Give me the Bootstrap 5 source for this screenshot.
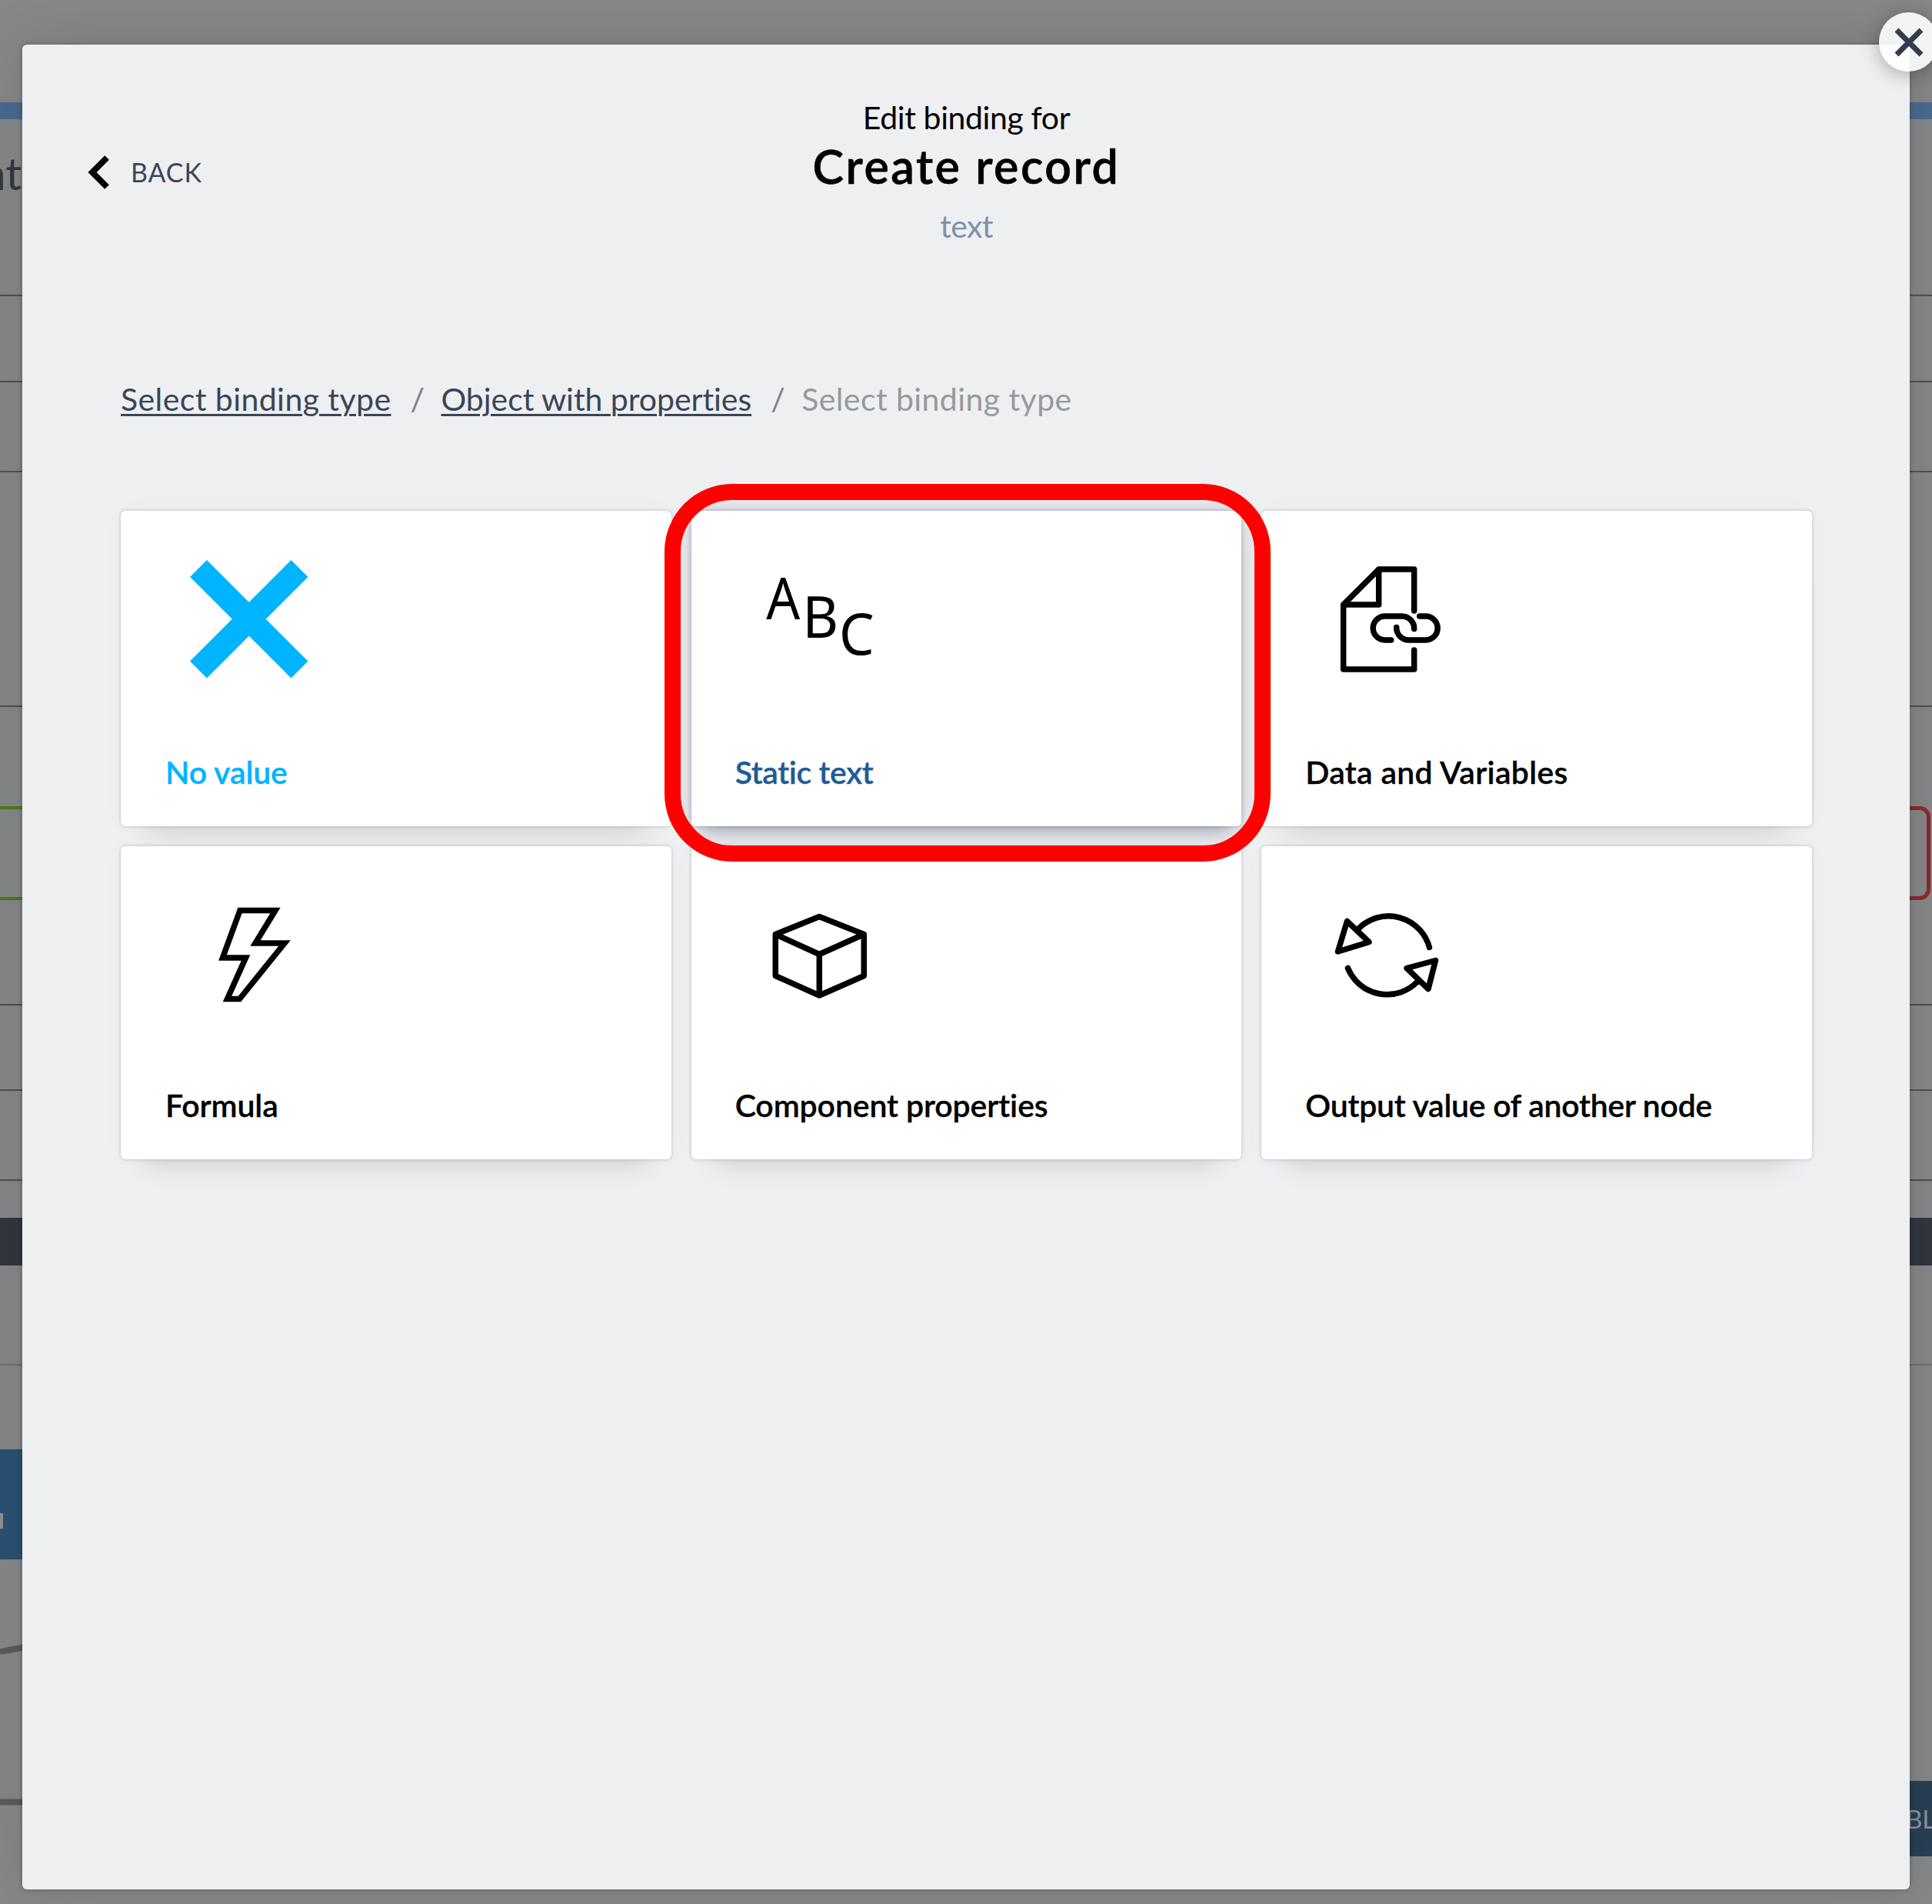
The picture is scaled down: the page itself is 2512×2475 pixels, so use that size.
<!DOCTYPE html>
<html lang="en">
<head>
<meta charset="utf-8">
<meta name="viewport" content="width=device-width, initial-scale=1">
<title>Edit binding</title>
<link href="https://cdn.jsdelivr.net/npm/bootstrap@5.3.0/dist/css/bootstrap.min.css" rel="stylesheet">
<style>
  html, body { height: 2475px; }
  body { font-family: Lato, "Open Sans", sans-serif; font-size: 41px; line-height: 50px; color: #000; background: #868788; overflow: hidden; }
  /* dimmed page behind the dialog */
  .canvas { height: 2475px; }
  .ln { height: 2px; background: #4e5056; }
  .thin { background: #6d6e70; }
  .topbar { height: 22px; background: #4a6a90; }
  .darkbar { height: 62px; background: #32363f; }
  .h-top { height: 133px; } .h-title { height: 228px; } .h-a { height: 110px; } .h-b { height: 115px; } .h-c { height: 304px; }
  .h-d { height: 129px; } .h-e { height: 135px; } .h-f { height: 115px; } .h-g { height: 48px; } .h-h { height: 128px; } .h-i { height: 109px; }
  .page-title { font-size: 58px; line-height: 68px; color: #33383f; width: 28px; padding-top: 36px; direction: rtl; white-space: nowrap; overflow: hidden; }
  .green-box { width: 60px; height: 122px; border: solid #4a7c1f; border-width: 4px 0; }
  .red-box { width: 60px; height: 122px; border: 5px solid #8c2a2c; border-left: 0; border-radius: 0 14px 14px 0; margin-right: 2px; }
  .blue-left { width: 60px; height: 143px; background: #2b5273; padding-top: 83px; }
  .blue-left i { display: block; width: 4px; height: 20px; background: #94908f; }
  .blue-right { width: 52px; height: 98px; margin-top: 431px; background: #293f53; color: #8b9399; font-size: 33px; line-height: 98px; padding-left: 18px; white-space: nowrap; overflow: hidden; }
  .wires { width: 60px; height: 448px; display: block; }

  .dialog { left: 29px; top: 58px; width: 2454px; height: 2398px; background: #eeeff1; border-radius: 6px; padding: 70px 127px 0 128px; box-shadow: 0 0 6px rgba(0,0,0,.25), 0 0 80px rgba(0,0,0,.12); }
  .close-btn { left: 2443px; top: 16px; width: 77px; height: 77px; background: rgba(255,255,255,.9); box-shadow: 0 4px 24px rgba(0,0,0,.3); }
  .back { font-size: 34px; color: #3c4658; letter-spacing: .9px; margin-left: -44px; margin-top: 71px; gap: 27px; }
  .dlg-head { height: 366px; }
  .dlg-lead { letter-spacing: -.4px; }
  .dlg-title { font-size: 61px; line-height: 72px; font-weight: 600; letter-spacing: 2.5px; margin: 2px 0 17px; -webkit-text-stroke: .6px; }
  .sub { color: #8090aa; letter-spacing: -.6px; }
  .trail { letter-spacing: .42px; margin-bottom: 120px; color: #999b9f; --bs-breadcrumb-divider-color: #7e8186; --bs-breadcrumb-item-padding-x: 25px; }
  .trail a { color: #3a4557; text-decoration-thickness: 3px; text-underline-offset: 4px; }
  .trail .tight { letter-spacing: -.05px; }
  .trail .active { color: #97999d; }
  .trail .breadcrumb-item + .breadcrumb-item::before { width: 15px; margin-right: 25px; padding-right: 0; }
  .tiles { --bs-gutter-x: 26px; --bs-gutter-y: 26px; }
  .tile { height: 410px; border: 0; border-radius: 6px; font-weight: 600; box-shadow: 0 0 4px rgba(40,55,80,.28), 0 38px 36px -34px rgba(0,0,0,.14), 0 0 40px rgba(40,55,80,.02); }
  .row-b .tile { height: 407px; }
  .tile.hovered { color: #1f5c94; box-shadow: 0 0 5px rgba(40,55,80,.3), 0 0 28px rgba(40,55,80,.22), 0 22px 24px -16px rgba(40,55,80,.3); }
  .tile-icon { width: 180px; height: 180px; margin: 40px 0 0 80px; color: #000; fill: none; stroke: currentColor; stroke-width: 7.5; }
  .tile-label { margin: 0 0 45px 58px; letter-spacing: -.12px; -webkit-text-stroke: .3px; }
  .ls-static { letter-spacing: -.4px; margin-left: 57px; } .ls-data { letter-spacing: .27px; margin-left: 57px; } .ls-out { letter-spacing: -.28px; margin-left: 57px; } .ls-comp { margin-left: 57px; }
  .cyan { color: #00b4ff; }
  .callout-ring { left: 864px; top: 629px; width: 788px; height: 491px; border: 21px solid #f00; border-radius: 88px; pointer-events: none; }
</style>
</head>
<body>
<div class="canvas d-flex flex-column">
  <div class="h-top"></div>
  <div class="topbar"></div>
  <div class="h-title"><div class="page-title">Component</div></div>
  <div class="ln"></div><div class="h-a"></div>
  <div class="ln"></div><div class="h-b"></div>
  <div class="ln"></div><div class="h-c"></div>
  <div class="ln"></div><div class="h-d"></div>
  <div class="d-flex justify-content-between"><div class="green-box"></div><div class="red-box"></div></div>
  <div class="h-e"></div>
  <div class="ln"></div><div class="h-i"></div>
  <div class="ln"></div><div class="h-f"></div>
  <div class="ln"></div><div class="h-g"></div>
  <div class="darkbar"></div>
  <div class="h-h"></div>
  <div class="ln thin"></div><div class="h-i"></div>
  <div class="d-flex justify-content-between">
    <div>
      <div class="blue-left"><i></i></div>
      <svg class="wires" viewBox="0 2027 60 448" fill="none" stroke="#5a5b5d" stroke-width="8"><path d="M0 2147 60 2136M0 2342.500H60"/></svg>
    </div>
    <div class="blue-right">BLE</div>
  </div>
</div>

<main class="dialog position-absolute">
  <header class="dlg-head row g-0 text-center">
    <div class="col-3"><div class="back d-flex align-items-center">
      <svg width="30" height="46" viewBox="0 0 30 46" fill="none" stroke="#000" stroke-width="8"><path d="M26 4 7 23 26 42"/></svg>BACK</div></div>
    <div class="col-6">
      <div class="dlg-lead">Edit binding for</div>
      <h1 class="dlg-title">Create record</h1>
      <div class="sub">text</div>
    </div>
  </header>
  <nav><ol class="breadcrumb trail">
    <li class="breadcrumb-item"><a href="#">Select binding type</a></li>
    <li class="breadcrumb-item tight"><a href="#">Object with properties</a></li>
    <li class="breadcrumb-item active">Select binding type</li>
  </ol></nav>
  <section class="row tiles">
    <div class="col-4"><div class="card tile justify-content-between cyan">
      <svg class="tile-icon cyan" viewBox="237 704 180 180"><path stroke-width="31" d="M258 739 389.500 870.500M389.500 739 258 870.500"/></svg>
      <div class="tile-label">No value</div></div></div>
    <div class="col-4"><div class="card tile hovered justify-content-between">
      <svg class="tile-icon" viewBox="978.700 704 180 180"><g fill="#000" stroke="none" font-family="Noto Sans, sans-serif" font-size="75" font-weight="400"><text x="996" y="805" textLength="44" lengthAdjust="spacingAndGlyphs">A</text><text x="1043" y="828.500" textLength="47" lengthAdjust="spacingAndGlyphs">B</text><text x="1090.500" y="850.500" textLength="46" lengthAdjust="spacingAndGlyphs">C</text></g></svg>
      <div class="tile-label ls-static">Static text</div></div></div>
    <div class="col-4"><div class="card tile justify-content-between">
      <svg class="tile-icon" viewBox="1720.300 704 180 180" stroke-linejoin="round" stroke-linecap="round"><path d="M1839 794V740H1793L1747 786V870H1839V845M1793 740V786H1747M1809 832H1801a15.500 15.500 0 0 1 0-31H1823a16 16 0 0 1 16 16.500M1846 801H1854a15.500 15.500 0 0 1 0 31H1832a16 16 0 0 1-16-16.500"/></svg>
      <div class="tile-label ls-data">Data and Variables</div></div></div>
    <div class="col-4 row-b"><div class="card tile justify-content-between">
      <svg class="tile-icon" viewBox="237 1139.500 180 180"><path d="M312 1183H358L332 1225.500H370L311.500 1298H295.500L319.500 1244.500H289.500Z"/></svg>
      <div class="tile-label">Formula</div></div></div>
    <div class="col-4 row-b"><div class="card tile justify-content-between">
      <svg class="tile-icon" viewBox="978.700 1139.500 180 180" stroke-linejoin="round"><path d="M1065 1191 1123 1214V1268L1065 1293.500 1008 1268V1214ZM1008 1214 1065 1240 1123 1214M1065 1240V1293"/></svg>
      <div class="tile-label ls-comp">Component properties</div></div></div>
    <div class="col-4 row-b"><div class="card tile justify-content-between">
      <svg class="tile-icon" viewBox="1720 1139.500 180 180" stroke-linejoin="round" stroke-linecap="round"><path d="M1767 1206A55 55 0 0 1 1858.500 1231M1752.500 1258A55 55 0 0 0 1843 1275.500M1751.500 1197 1739.500 1236.500 1780 1224ZM1866.500 1248 1829 1258 1857 1285Z"/></svg>
      <div class="tile-label ls-out">Output value of another node</div></div></div>
  </section>
</main>
<div class="callout-ring position-absolute"></div>
<button class="close-btn btn position-absolute rounded-circle border-0 p-0 d-flex align-items-center justify-content-center" aria-label="Close">
  <svg width="40" height="40" viewBox="0 0 40 40" fill="none" stroke="#343b4c" stroke-width="7"><path d="M4 4 36 36M36 4 4 36"/></svg>
</button>
<script src="https://cdn.jsdelivr.net/npm/bootstrap@5.3.0/dist/js/bootstrap.bundle.min.js"></script>
</body>
</html>
